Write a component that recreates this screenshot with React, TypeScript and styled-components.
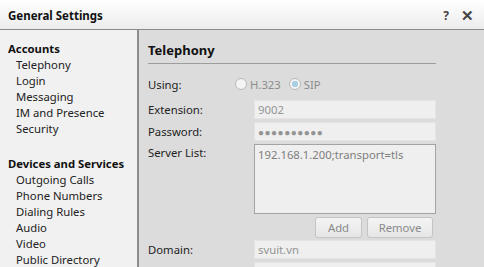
import React from "react";
import styled, { createGlobalStyle } from "styled-components";

const Global = createGlobalStyle`
  html, body { margin: 0; padding: 0; background: #f0f0f0; }
  body { font-family: "Noto Sans", "Open Sans", sans-serif; font-size: 11.3px; color: #1e1e1e; }
  * { box-sizing: border-box; }
`;

const Window = styled.div`
  width: 484px;
  height: 267px;
  display: flex;
  flex-direction: column;
  overflow: hidden;
`;

const TitleBar = styled.div`
  height: 30px;
  flex: none;
  display: flex;
  align-items: center;
  padding: 2px 10px 0 8px;
  background: linear-gradient(#ffffff, #ececec);
  border-bottom: 1px solid #8a8a8a;
`;

const Title = styled.div`
  font-weight: 700;
  font-size: 11.5px;
  flex: 1;
  color: #111;
`;

const TitleButton = styled.span<{ $size?: number }>`
  font-weight: 700;
  color: #444;
  font-size: ${(p) => p.$size ?? 12}px;
  margin-left: 12px;
  line-height: 1;
`;

const Body = styled.div`
  flex: 1;
  display: flex;
  min-height: 0;
`;

const Sidebar = styled.div`
  width: 137px;
  flex: none;
  background: #f1f1f1;
  padding: 11px 0 0 8px;
  display: flex;
  flex-direction: column;
`;

const Group = styled.div`
  display: flex;
  flex-direction: column;
  margin-bottom: 19px;
`;

const GroupTitle = styled.div`
  font-weight: 700;
  line-height: 16px;
  height: 16px;
  color: #111;
`;

const NavItem = styled.div`
  padding-left: 8px;
  line-height: 16px;
  height: 16px;
  color: #222;
`;

const Content = styled.div`
  flex: 1;
  background: #dcdcdc;
  border-left: 2px solid #8c8c8c;
  padding: 11px 48px 0 9px;
  display: flex;
  flex-direction: column;
`;

const Header = styled.div`
  font-weight: 700;
  font-size: 13px;
  line-height: 18px;
  padding-bottom: 4px;
  border-bottom: 1px solid #9d9d9d;
  color: #111;
  margin-bottom: 8px;
`;

const Row = styled.div<{ $h: number; $mb?: number }>`
  display: grid;
  grid-template-columns: 106px 1fr;
  align-items: ${(p) => (p.$h > 30 ? "start" : "center")};
  min-height: ${(p) => p.$h}px;
  margin-bottom: ${(p) => p.$mb ?? 3}px;
`;

const Label = styled.div<{ $pt?: number }>`
  padding-top: ${(p) => p.$pt ?? 0}px;
  color: #222;
`;

const Radios = styled.div`
  display: flex;
  align-items: center;
  gap: 8px;
  color: #8c8c8c;
  margin-left: -19px;
`;

const Radio = styled.span`
  display: inline-flex;
  align-items: center;
  gap: 3px;
`;

const RadioDot = styled.span<{ $checked?: boolean }>`
  width: 12px;
  height: 12px;
  border-radius: 50%;
  border: 1px solid #b8b8b8;
  background: ${(p) =>
    p.$checked
      ? "radial-gradient(circle, #a9cfe3 0 3px, #f4f4f4 3.5px)"
      : "#f4f4f4"};
`;

const Field = styled.div`
  height: 19px;
  background: #efefef;
  border: 1px solid #e4e4e4;
  color: #949494;
  padding: 0 3px;
  line-height: 17px;
`;

const Dots = styled.span`
  letter-spacing: 0.5px;
  font-size: 10px;
`;

const TextArea = styled.div`
  height: 70px;
  background: #efefef;
  border: 1px solid #a3a3a3;
  color: #7e7e7e;
  padding: 1px 3px;
  line-height: 17px;
`;

const Buttons = styled.div`
  display: flex;
  justify-content: flex-end;
  gap: 5px;
  padding-right: 3px;
  margin: 3px 0 2px;
`;

const Button = styled.div<{ $w: number }>`
  width: ${(p) => p.$w}px;
  height: 21px;
  border: 1px solid #c4c4c4;
  border-radius: 3px;
  background: linear-gradient(#f4f4f4, #e6e6e6);
  color: #8a8a8a;
  display: flex;
  align-items: center;
  justify-content: center;
`;

export default function App() {
  return (
    <>
      <Global />
      <Window>
        <TitleBar>
          <Title>General Settings</Title>
          <TitleButton>?</TitleButton>
          <TitleButton $size={15}>✕</TitleButton>
        </TitleBar>
        <Body>
          <Sidebar>
            <Group>
              <GroupTitle>Accounts</GroupTitle>
              <NavItem>Telephony</NavItem>
              <NavItem>Login</NavItem>
              <NavItem>Messaging</NavItem>
              <NavItem>IM and Presence</NavItem>
              <NavItem>Security</NavItem>
            </Group>
            <Group>
              <GroupTitle>Devices and Services</GroupTitle>
              <NavItem>Outgoing Calls</NavItem>
              <NavItem>Phone Numbers</NavItem>
              <NavItem>Dialing Rules</NavItem>
              <NavItem>Audio</NavItem>
              <NavItem>Video</NavItem>
              <NavItem>Public Directory</NavItem>
            </Group>
          </Sidebar>
          <Content>
            <Header>Telephony</Header>
            <Row $h={24} $mb={4}>
              <Label>Using:</Label>
              <Radios>
                <Radio>
                  <RadioDot /> H.323
                </Radio>
                <Radio>
                  <RadioDot $checked /> SIP
                </Radio>
              </Radios>
            </Row>
            <Row $h={19}>
              <Label>Extension:</Label>
              <Field>9002</Field>
            </Row>
            <Row $h={19}>
              <Label>Password:</Label>
              <Field>
                <Dots>●●●●●●●●●●</Dots>
              </Field>
            </Row>
            <Row $h={70} $mb={0}>
              <Label $pt={1}>Server List:</Label>
              <TextArea>192.168.1.200;transport=tls</TextArea>
            </Row>
            <Buttons>
              <Button $w={47}>Add</Button>
              <Button $w={66}>Remove</Button>
            </Buttons>
            <Row $h={19}>
              <Label>Domain:</Label>
              <Field>svuit.vn</Field>
            </Row>
            <Row $h={19}>
              <Label></Label>
              <Field />
            </Row>
          </Content>
        </Body>
      </Window>
    </>
  );
}
